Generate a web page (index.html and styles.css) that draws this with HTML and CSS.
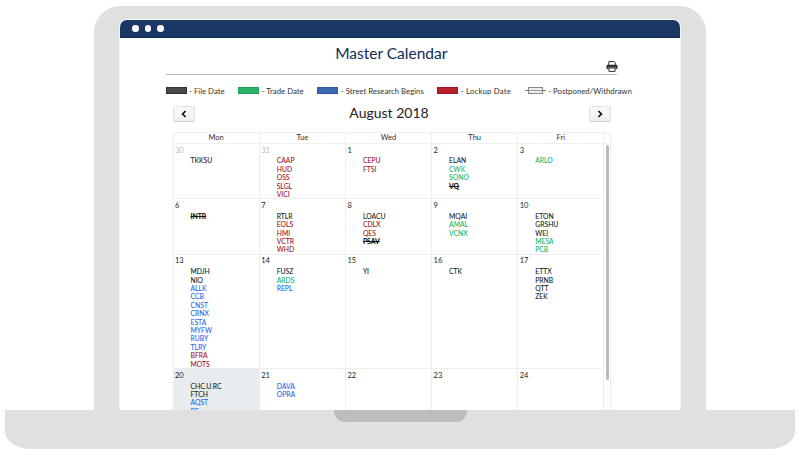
FILE: index.html
```html
<!DOCTYPE html>
<html lang="en">
<head>
<meta charset="utf-8">
<title>Master Calendar</title>
<link rel="stylesheet" href="styles.css">
</head>
<body>
<div class="laptop">
  <div class="lid">
    <div class="screen">
      <div class="titlebar"><i class="dot"></i><i class="dot"></i><i class="dot"></i></div>
      <div class="page">
        <header class="head">
          <h1 class="title">Master Calendar</h1>
          <svg class="print" width="12" height="11" viewBox="0 0 12 11" aria-hidden="true">
            <path d="M2.8 4V.6h5.4l1 1V4" fill="none" stroke="#333" stroke-width="1"/>
            <path d="M1.4 3.8h9.2c.5 0 .9.4.9.9v3.2H9.6V6.6H2.4v1.3H.5V4.7c0-.5.4-.9.9-.9z" fill="#333"/>
            <path d="M2.9 7h6.2v3.4H2.9z" fill="none" stroke="#333" stroke-width="1"/>
          </svg>
        </header>
        <div class="legend">
          <span class="legend-item"><i class="swatch s-file"></i>- File Date</span>
          <span class="legend-item"><i class="swatch s-trade"></i>- Trade Date</span>
          <span class="legend-item"><i class="swatch s-street"></i>- Street Research Begins</span>
          <span class="legend-item legend-wide"><i class="swatch s-lock"></i>- Lockup Date</span>
          <span class="legend-item"><svg class="swatch-post" width="21" height="7" viewBox="0 0 21 7" aria-hidden="true"><path d="M0 3.5h21" stroke="#777" stroke-width="1"/><rect x="3.5" y=".5" width="14" height="6" fill="#eee" stroke="#888"/><path d="M3.5 3.5h14" stroke="#999" stroke-width="1"/></svg>- Postponed/Withdrawn</span>
        </div>
        <div class="cal">
          <div class="cal-nav">
            <button class="nav-btn" type="button"><svg width="6" height="8" viewBox="0 0 6 8" aria-hidden="true"><path d="M4.6 1 1.6 4l3 3" fill="none" stroke="#111" stroke-width="1.7"/></svg></button>
            <h2 class="month">August 2018</h2>
            <button class="nav-btn" type="button"><svg width="6" height="8" viewBox="0 0 6 8" aria-hidden="true"><path d="M1.4 1l3 3-3 3" fill="none" stroke="#111" stroke-width="1.7"/></svg></button>
          </div>
          <div class="weekdays">
            <div class="wd">Mon</div><div class="wd">Tue</div><div class="wd">Wed</div><div class="wd">Thu</div><div class="wd">Fri</div><div class="wd-end"></div>
          </div>
          <div class="scroller">
            <div class="days">
              <div class="day"><div class="num muted">30</div><ul class="tickers"><li>TKKSU</li></ul></div>
              <div class="day"><div class="num muted">31</div><ul class="tickers"><li class="r">CAAP</li><li class="r">HUD</li><li class="r">OSS</li><li class="r">SLGL</li><li class="r">VICI</li></ul></div>
              <div class="day"><div class="num">1</div><ul class="tickers"><li class="r">CEPU</li><li class="r">FTSI</li></ul></div>
              <div class="day"><div class="num">2</div><ul class="tickers"><li>ELAN</li><li class="g">CWK</li><li class="g">SONO</li><li class="x">VQ</li></ul></div>
              <div class="day"><div class="num">3</div><ul class="tickers"><li class="g">ARLO</li></ul></div>

              <div class="day"><div class="num">6</div><ul class="tickers"><li class="x">INTR</li></ul></div>
              <div class="day"><div class="num">7</div><ul class="tickers"><li>RTLR</li><li class="r">EOLS</li><li class="r">HMI</li><li class="r">VCTR</li><li class="r">WHD</li></ul></div>
              <div class="day"><div class="num">8</div><ul class="tickers"><li>LOACU</li><li class="r">CDLX</li><li class="r">QES</li><li class="x">PSAV</li></ul></div>
              <div class="day"><div class="num">9</div><ul class="tickers"><li>MQAI</li><li class="g">AMAL</li><li class="g">VCNX</li></ul></div>
              <div class="day"><div class="num">10</div><ul class="tickers"><li>ETON</li><li>GRSHU</li><li>WEI</li><li class="g">MESA</li><li class="g">PCB</li></ul></div>

              <div class="day"><div class="num">13</div><ul class="tickers"><li>MDJH</li><li>NIO</li><li class="b">ALLK</li><li class="b">CCB</li><li class="b">CNST</li><li class="b">CRNX</li><li class="b">ESTA</li><li class="b">MYFW</li><li class="b">RUBY</li><li class="b">TLRY</li><li class="r">BFRA</li><li class="r">MOTS</li></ul></div>
              <div class="day"><div class="num">14</div><ul class="tickers"><li>FUSZ</li><li class="g">ARDS</li><li class="b">REPL</li></ul></div>
              <div class="day"><div class="num">15</div><ul class="tickers"><li>YI</li></ul></div>
              <div class="day"><div class="num">16</div><ul class="tickers"><li>CTK</li></ul></div>
              <div class="day"><div class="num">17</div><ul class="tickers"><li>ETTX</li><li>PRNB</li><li>QTT</li><li>ZEK</li></ul></div>

              <div class="day today"><div class="num">20</div><ul class="tickers"><li>CHC.U.RC</li><li>FTCH</li><li class="b">AQST</li><li class="b">BE</li></ul></div>
              <div class="day"><div class="num">21</div><ul class="tickers"><li class="b">DAVA</li><li class="b">OPRA</li></ul></div>
              <div class="day"><div class="num">22</div></div>
              <div class="day"><div class="num">23</div></div>
              <div class="day"><div class="num">24</div></div>
            </div>
            <div class="scrollbar"><div class="thumb"></div></div>
          </div>
        </div>
      </div>
    </div>
  </div>
  <div class="base"><div class="notch"></div></div>
</div>
</body>
</html>
```

FILE: styles.css
```css
* { box-sizing: border-box; }
html, body { margin: 0; padding: 0; background: #fff; }
body { font-family: Lato, "Open Sans", sans-serif; color: #222; overflow: hidden; height: 457px; }

.laptop { width: 800px; padding-top: 6px; }
.lid {
  width: 612px;
  height: 404px;
  margin: 0 auto;
  padding: 14px 26px 0;
  background: #e0e0e0;
  border-radius: 26px 26px 0 0;
  overflow: hidden;
}
.screen {
  width: 560px;
  height: 390px;
  background: #fff;
  box-shadow: 0 0 0 1px #f4f4f4;
  border-radius: 7px 7px 0 0;
  overflow: hidden;
}
.titlebar {
  height: 17.5px;
  background: #1b3765;
  border-bottom: 1px solid #0f2a58;
  display: flex;
  align-items: center;
  gap: 6px;
  padding-left: 12px;
}
.dot { width: 6.5px; height: 6.5px; border-radius: 50%; background: #fff; }

.page { padding: 0 63px 0 45.5px; }
.head {
  height: 37px;
  display: flex;
  justify-content: center;
  position: relative;
  border-bottom: 1px solid #b9b9b9;
}
.title {
  margin: 4px 0 0;
  font-size: 15.5px;
  line-height: 22px;
  font-weight: 400;
  color: #0f2a5c;
}
.print { position: absolute; right: -1px; bottom: 2px; }

.legend {
  display: flex;
  gap: 13.5px;
  margin-top: 12px;
  height: 8px;
  align-items: center;
  font-size: 7.8px;
  line-height: 8px;
  color: #333;
  white-space: nowrap;
}
.legend-item { display: flex; align-items: center; gap: 2.5px; }
.legend-wide { letter-spacing: .18px; }
.swatch { width: 21px; height: 7px; border: 1px solid; }
.swatch-post { display: block; }
.s-file { background: #4a4a4a; border-color: #333; }
.s-trade { background: #2cb36b; border-color: #21a05c; }
.s-street { background: #3d69b3; border-color: #2e59a5; }
.s-lock { background: #b7202b; border-color: #a8141f; }

.cal { width: 438px; margin: 11px 0 0 7px; }
.cal-nav { display: flex; align-items: center; justify-content: space-between; height: 16px; }
.nav-btn {
  width: 22px;
  height: 16px;
  padding: 0;
  display: flex;
  align-items: center;
  justify-content: center;
  background: linear-gradient(#fafafa, #eee);
  border: 1px solid #e2e2e2;
  border-bottom-color: #cfcfcf;
  border-radius: 2px;
}
.month {
  margin: -1px 0 0;
  padding-right: 5px;
  font-size: 14px;
  line-height: 16px;
  font-weight: 400;
  color: #222;
}

.weekdays {
  display: grid;
  grid-template-columns: repeat(5, 86.2px) 1fr;
  margin-top: 10px;
  border: 1px solid #f0f0f0;
  height: 12.5px;
}
.wd {
  font-size: 7.5px;
  line-height: 10px;
  text-align: center;
  color: #333;
  border-right: 1px solid #eee;
}
.scroller { display: flex; }
.days {
  width: 432px;
  flex: none;
  display: grid;
  grid-template-columns: repeat(5, 86.2px);
  border-left: 1px solid #eee;
  align-content: start;
}
.day {
  border-right: 1px solid #eee;
  border-bottom: 1px solid #eee;
}
.today { background: #e9ecef; }
.num {
  height: 12.4px;
  padding: 1.5px 0 0 1.5px;
  font-size: 7.5px;
  line-height: 9px;
  color: #222;
}
.muted { color: #bbb; }
.tickers {
  list-style: none;
  margin: 0;
  padding: 0 0 0 17px;
  font-size: 6.8px;
  line-height: 8.4px;
  color: #222;
  -webkit-text-stroke: .08px currentColor;
}
.r { color: #a3121c; }
.g { color: #14b868; }
.b { color: #2565f0; }
.x { text-decoration: line-through; color: #111; font-weight: 700; }

.scrollbar { width: 6px; padding: 1px 0 0 1px; border-right: 1px solid #eee; }
.thumb { width: 3.5px; height: 235px; background: #b9b9b9; border-radius: 2px; }

.base {
  width: 790px;
  height: 39px;
  margin: 0 auto;
  background: #e0e0e0;
  border-radius: 0 0 26px 26px / 0 0 17px 17px;
  display: flex;
  justify-content: center;
}
.notch {
  width: 133px;
  height: 12px;
  background: #bdbdbd;
  border-radius: 0 0 11px 11px;
}
```
